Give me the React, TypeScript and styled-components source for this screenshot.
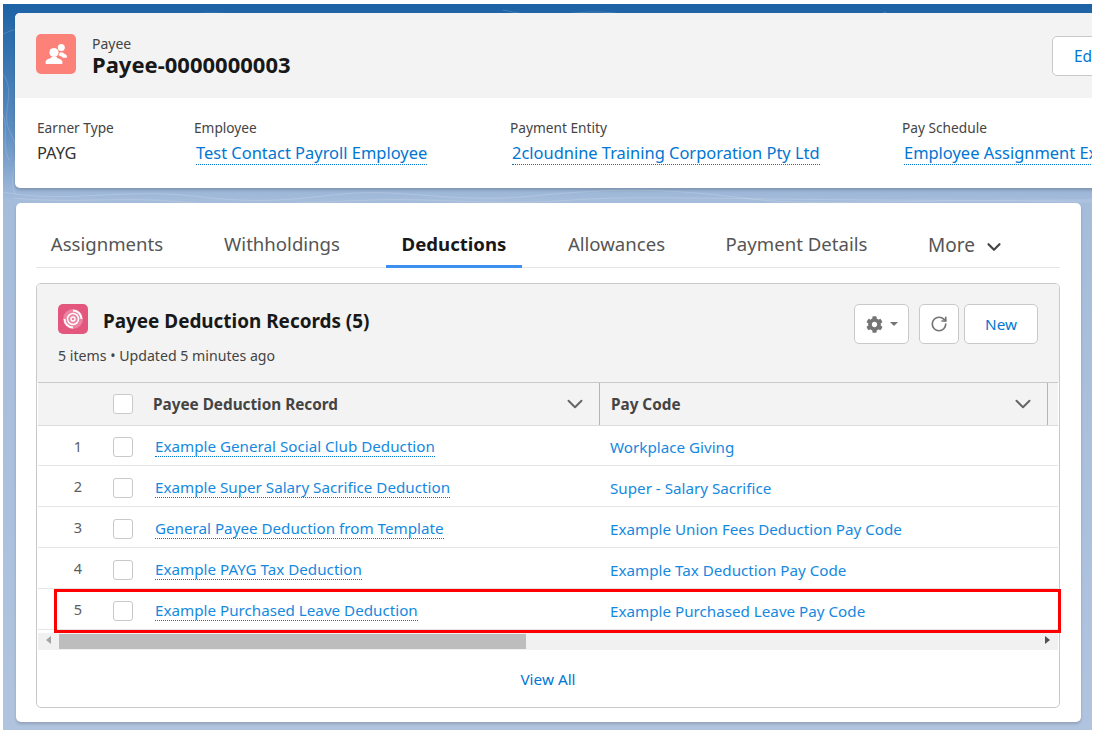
import React from "react";
import styled, { createGlobalStyle } from "styled-components";
import { ChevronDown, RotateCw } from "lucide-react";
import { FaCog } from "react-icons/fa";

const Global = createGlobalStyle`
  html, body { margin: 0; padding: 0; background: #fff; }
  body { font-family: "Noto Sans", "Open Sans", "Liberation Sans", sans-serif; color: #181818; }
  * { box-sizing: border-box; }
`;

const Page = styled.div`
  position: relative;
  width: 1089px;
  height: 726px;
  margin: 4px 0 0 3px;
  overflow: hidden;
  background: linear-gradient(180deg, #1c62a5 0%, #5b8cc0 17%, #a5bcdb 27%, #b0c4df 100%);
  padding: 9px 0 0 12px;
`;

const Contours = styled.svg`
  position: absolute;
  left: 0;
  top: 0;
  width: 1089px;
  height: 240px;
  fill: none;
  stroke: rgba(255, 255, 255, 0.16);
  stroke-width: 1;
`;

const RecordCard = styled.section`
  position: relative;
  width: 1110px;
  height: 175px;
  background: #fff;
  border-radius: 5px;
  overflow: hidden;
  box-shadow: 0 2px 3px rgba(0, 0, 0, 0.18);
`;

const RecordHeader = styled.header`
  height: 85px;
  background: #f3f3f3;
  display: flex;
  align-items: flex-start;
  padding: 21px 0 0 21px;
`;

const HeaderIcon = styled.div`
  flex: none;
  width: 40px;
  height: 40px;
  border-radius: 5px;
  background: #fc8279;
  display: flex;
  align-items: center;
  justify-content: center;
  margin-right: 16px;
`;

const TitleBlock = styled.div`
  flex: none;
  width: 960px;
`;

const Entity = styled.div`
  font-size: 14px;
  line-height: 19px;
  color: #444;
`;

const RecordTitle = styled.h1`
  margin: 0;
  font-size: 22px;
  line-height: 22px;
  font-weight: 700;
  color: #181818;
`;

const EditButton = styled.button`
  flex: none;
  width: 80px;
  height: 40px;
  margin-top: 2px;
  background: #fff;
  border: 1px solid #c9c9c9;
  border-radius: 5px;
  font: inherit;
  font-size: 15.5px;
  color: #0176d3;
  text-align: left;
  padding-left: 21px;
`;

const Highlights = styled.div`
  display: flex;
  padding: 20px 0 0 22px;
`;

const Field = styled.div<{ $width: number }>`
  flex: none;
  width: ${(p) => p.$width}px;
`;

const FieldLabel = styled.div`
  font-size: 13.7px;
  line-height: 19px;
  color: #444;
`;

const FieldValue = styled.div`
  font-size: 16.45px;
  line-height: 24px;
  margin-top: 4px;
  color: #333;
  white-space: nowrap;
`;

const FieldLink = styled.a`
  color: #0176d3;
  margin-left: 2px;
  border-bottom: 1px dotted #0176d3;
  text-decoration: none;
  display: inline-block;
  line-height: 23px;
`;

const MainCard = styled.section`
  position: relative;
  width: 1065px;
  height: 519px;
  margin: 15px 0 0 1px;
  background: #fff;
  border-radius: 5px;
  box-shadow: 0 2px 3px rgba(0, 0, 0, 0.18);
  padding: 0 21px 0 20px;
`;

const Tabs = styled.nav`
  height: 65px;
  display: flex;
  align-items: flex-start;
  border-bottom: 1px solid #e5e5e5;
`;

const Tab = styled.div<{ $active?: boolean; $left: number; $width: number }>`
  flex: none;
  margin-left: ${(p) => p.$left}px;
  width: ${(p) => p.$width}px;
  height: 65px;
  padding-top: 27px;
  font-size: 18.6px;
  line-height: 28px;
  text-align: center;
  white-space: nowrap;
  font-weight: ${(p) => (p.$active ? 700 : 400)};
  color: ${(p) => (p.$active ? "#181818" : "#555")};
  border-bottom: 3px solid ${(p) => (p.$active ? "#3d8ff0" : "transparent")};
`;

const MoreTab = styled.div`
  flex: none;
  margin-left: 53px;
  height: 65px;
  padding-top: 28px;
  display: flex;
  gap: 8px;
  font-size: 19px;
  line-height: 28px;
  color: #555;
  svg { margin-top: 5px; color: #444; }
`;

const ListBox = styled.div`
  position: relative;
  height: 425px;
  margin-top: 15px;
  border: 1px solid #c9c9c9;
  border-radius: 5px;
`;

const ListHeader = styled.div`
  height: 98px;
  background: #f3f3f3;
  border-radius: 4px 4px 0 0;
  padding: 20px 21px 0;
  display: flex;
  justify-content: space-between;
`;

const ListTitleRow = styled.div`
  display: flex;
  align-items: center;
  gap: 15px;
  height: 30px;
`;

const ListIcon = styled.div`
  width: 30px;
  height: 30px;
  background: #e3577f;
  border-radius: 5px;
  display: flex;
  align-items: center;
  justify-content: center;
`;

const ListTitle = styled.h2`
  margin: 0;
  padding-top: 4px;
  font-size: 18.9px;
  font-weight: 700;
  color: #181818;
`;

const ListMeta = styled.div`
  font-size: 14.15px;
  line-height: 18px;
  color: #444;
  margin-top: 13px;
`;

const Actions = styled.div`
  display: flex;
`;

const ActionButton = styled.button<{ $width: number; $left?: number }>`
  width: ${(p) => p.$width}px;
  height: 40px;
  margin-left: ${(p) => p.$left ?? 0}px;
  background: #fff;
  border: 1px solid #c9c9c9;
  border-radius: 5px;
  display: flex;
  align-items: center;
  justify-content: center;
  gap: 7px;
  color: #747474;
  font: inherit;
  font-size: 15.3px;
  padding: 0;
`;

const NewLabel = styled.span`
  color: #0176d3;
`;

const Caret = styled.span`
  width: 0;
  height: 0;
  border-left: 4px solid transparent;
  border-right: 4px solid transparent;
  border-top: 4px solid #747474;
`;

const Grid = styled.div`
  margin: 0 1px;
`;

const HeadRow = styled.div`
  height: 44px;
  display: grid;
  grid-template-columns: 75px 40px 447px 448px 1fr;
  align-items: center;
  background: #f3f3f3;
  border-top: 1px solid #c9c9c9;
  border-bottom: 1px solid #dcdcdc;
`;

const BodyRow = styled.div<{ $height: number }>`
  height: ${(p) => p.$height}px;
  display: grid;
  grid-template-columns: 75px 40px 447px 448px 1fr;
  align-items: center;
  border-bottom: 1px solid #e5e5e5;
`;

const Check = styled.span`
  display: block;
  width: 20px;
  height: 20px;
  background: #fff;
  border: 1px solid #c9c9c9;
  border-radius: 3px;
`;

const CheckCell = styled.div<{ $drop?: number }>`
  display: flex;
  align-items: center;
  height: 100%;
  padding-top: ${(p) => p.$drop ?? 0}px;
`;

const HeadCell = styled.div<{ $indent: number; $bar?: boolean }>`
  height: 100%;
  display: flex;
  align-items: center;
  justify-content: space-between;
  padding: 0 11px 0 ${(p) => p.$indent}px;
  font-size: 15.3px;
  font-weight: 700;
  color: #444;
  border-right: 1px solid ${(p) => (p.$bar ? "#b5b5b5" : "transparent")};
  svg { color: #666; }
`;

const RowNumber = styled.div`
  font-size: 14.5px;
  color: #5c5c5c;
  text-align: right;
  margin-right: 31px;
`;

const RecordLinkCell = styled.div`
  padding: 1px 0 0 2px;
  white-space: nowrap;
`;

const RecordLink = styled.a`
  font-size: 15.2px;
  line-height: 20px;
  color: #1589e0;
  text-decoration: none;
  border-bottom: 1px dotted #0176d3;
  display: inline-block;
`;

const CodeCell = styled.div`
  font-size: 15.2px;
  color: #1589e0;
  white-space: nowrap;
  padding: 3px 0 0 10px;
`;

const Scrollbar = styled.div`
  height: 17px;
  margin: 3px 1px 0;
  background: #f1f1f1;
  display: flex;
  align-items: center;
  justify-content: space-between;
  padding-right: 8px;
`;

const Thumb = styled.div`
  flex: none;
  width: 467px;
  height: 15px;
  background: #bdbdbd;
`;

const ArrowLeft = styled.span`
  flex: none;
  width: 0;
  height: 0;
  margin: -3px 8px 0 8px;
  border-top: 4.5px solid transparent;
  border-bottom: 4.5px solid transparent;
  border-right: 5px solid #a3a3a3;
`;

const ArrowRight = styled.span`
  flex: none;
  margin: -3px 0 0 auto;
  width: 0;
  height: 0;
  border-top: 4.5px solid transparent;
  border-bottom: 4.5px solid transparent;
  border-left: 5px solid #505050;
`;

const Footer = styled.div`
  height: 57px;
  display: flex;
  align-items: center;
  justify-content: center;
  font-size: 15.3px;
  color: #0176d3;
`;

const Highlight = styled.div`
  position: absolute;
  left: 17px;
  top: 305px;
  width: 1007px;
  height: 44px;
  border: 3px solid #f00;
  pointer-events: none;
`;

const rows = [
  { n: 1, rec: "Example General Social Club Deduction", code: "Workplace Giving", h: 40 },
  { n: 2, rec: "Example Super Salary Sacrifice Deduction", code: "Super - Salary Sacrifice", h: 41 },
  { n: 3, rec: "General Payee Deduction from Template", code: "Example Union Fees Deduction Pay Code", h: 41 },
  { n: 4, rec: "Example PAYG Tax Deduction", code: "Example Tax Deduction Pay Code", h: 41 },
  { n: 5, rec: "Example Purchased Leave Deduction", code: "Example Purchased Leave Pay Code", h: 41 },
];

const PeopleIcon = () => (
  <svg width="26" height="26" viewBox="0 0 26 26" fill="#fff">
    <circle cx="11" cy="11.500" r="4.600" />
    <path d="M2.500 22c0-2.600 1.400-3.600 3.800-4.400 1.200-.4 2-.9 2-1.700h5.400c0 .8.800 1.300 2 1.700 2.400.8 3.800 1.800 3.800 4.400 0 .6-.4 1-1 1H3.500c-.6 0-1-.4-1-1z" />
    <circle cx="18.300" cy="6.500" r="3.500" />
    <path d="M16.500 11.500h3.600c.1.700.7 1 1.600 1.400 1.500.6 2.300 1.300 2.300 3.100 0 .5-.3.800-.8.800h-3.400c-.6-1-1.700-1.600-3-2.100-.6-.2-1-.5-1.200-.8 1-.6 1-1.400.9-2.400z" />
  </svg>
);

const DiscIcon = () => (
  <svg width="22" height="22" viewBox="0 0 22 22" fill="none" stroke="#fff">
    <circle cx="11" cy="11" r="10" fill="#fff" stroke="none" opacity="0.28" />
    <circle cx="11" cy="11" r="5.500" strokeWidth="1.500" />
    <circle cx="11" cy="11" r="2" strokeWidth="1.400" />
    <path d="M11 2.500a8.500 8.500 0 0 1 8.500 8.500M11 19.500A8.500 8.500 0 0 1 2.500 11" strokeWidth="1.800" />
  </svg>
);

export default function App() {
  return (
    <>
      <Global />
      <Page>
        <Contours viewBox="0 0 1089 240">
          <path d="M0 30c40-20 60 20 110 5s60-30 120-25 80 20 150 8M500 6c60 14 70-6 130 6s90 6 150-2M880 8c40 14 90-6 209 14" />
          <path d="M0 70c14 20-4 40 8 60s-4 40 4 60M0 110c6 14-2 30 6 46" />
          <path d="M0 188c60 12 120-4 190 4s90 4 150-2 110 10 190 2 130-8 210 2 120 0 349 4" />
          <path d="M10 194c60 6 110-2 170 4s120 0 190-2 120 6 200 0 180 2 519 0" />
        </Contours>
        <RecordCard>
          <RecordHeader>
            <HeaderIcon><PeopleIcon /></HeaderIcon>
            <TitleBlock>
              <Entity>Payee</Entity>
              <RecordTitle>Payee-0000000003</RecordTitle>
            </TitleBlock>
            <EditButton>Edit</EditButton>
          </RecordHeader>
          <Highlights>
            <Field $width={157}>
              <FieldLabel>Earner Type</FieldLabel>
              <FieldValue>PAYG</FieldValue>
            </Field>
            <Field $width={316}>
              <FieldLabel>Employee</FieldLabel>
              <FieldValue><FieldLink>Test Contact Payroll Employee</FieldLink></FieldValue>
            </Field>
            <Field $width={392}>
              <FieldLabel>Payment Entity</FieldLabel>
              <FieldValue><FieldLink>2cloudnine Training Corporation Pty Ltd</FieldLink></FieldValue>
            </Field>
            <Field $width={300}>
              <FieldLabel>Pay Schedule</FieldLabel>
              <FieldValue><FieldLink>Employee Assignment Example</FieldLink></FieldValue>
            </Field>
          </Highlights>
        </RecordCard>
        <MainCard>
          <Tabs>
            <Tab $left={0} $width={142}>Assignments</Tab>
            <Tab $left={29} $width={150}>Withholdings</Tab>
            <Tab $left={29} $width={136} $active>Deductions</Tab>
            <Tab $left={38} $width={113}>Allowances</Tab>
            <Tab $left={45} $width={157}>Payment Details</Tab>
            <MoreTab>More <ChevronDown size={22} strokeWidth={2.400} /></MoreTab>
          </Tabs>
          <ListBox>
            <ListHeader>
              <div>
                <ListTitleRow>
                  <ListIcon><DiscIcon /></ListIcon>
                  <ListTitle>Payee Deduction Records (5)</ListTitle>
                </ListTitleRow>
                <ListMeta>5 items • Updated 5 minutes ago</ListMeta>
              </div>
              <Actions>
                <ActionButton $width={55}><FaCog size={17} /><Caret /></ActionButton>
                <ActionButton $width={40} $left={10}><RotateCw size={18} strokeWidth={2.200} /></ActionButton>
                <ActionButton $width={74} $left={5}><NewLabel>New</NewLabel></ActionButton>
              </Actions>
            </ListHeader>
            <Grid>
              <HeadRow>
                <div />
                <CheckCell><Check /></CheckCell>
                <HeadCell $indent={0} $bar>Payee Deduction Record <ChevronDown size={26} strokeWidth={1.800} /></HeadCell>
                <HeadCell $indent={11} $bar>Pay Code <ChevronDown size={26} strokeWidth={1.800} /></HeadCell>
                <div />
              </HeadRow>
              {rows.map((r) => (
                <BodyRow key={r.n} $height={r.h}>
                  <RowNumber>{r.n}</RowNumber>
                  <CheckCell $drop={3}><Check /></CheckCell>
                  <RecordLinkCell><RecordLink>{r.rec}</RecordLink></RecordLinkCell>
                  <CodeCell>{r.code}</CodeCell>
                  <div />
                </BodyRow>
              ))}
            </Grid>
            <Scrollbar>
              <ArrowLeft />
              <Thumb />
              <ArrowRight />
            </Scrollbar>
            <Footer>View All</Footer>
            <Highlight />
          </ListBox>
        </MainCard>
      </Page>
    </>
  );
}
